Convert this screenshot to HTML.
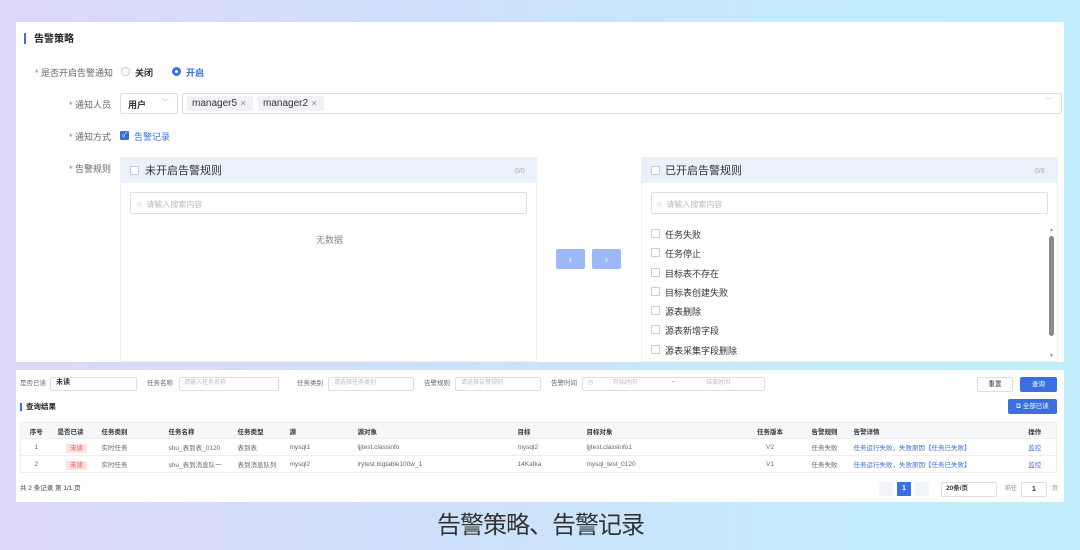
<!DOCTYPE html>
<html><head><meta charset="utf-8"><style>
*{box-sizing:border-box;margin:0;padding:0}
body{width:1080px;height:550px;overflow:hidden;font-family:"Liberation Sans","Noto Sans CJK SC",sans-serif;background:linear-gradient(90deg,#dcd8f8 0%,#cfe0fb 40%,#c3ebfb 75%,#c0ecfb 100%);position:relative;color:#333}
.abs{position:absolute}
.card{position:absolute;background:#fff}
.t{position:absolute;white-space:nowrap;line-height:1.2}
.u{margin-top:2px}
.lab{font-size:9px;color:#666}
.req{color:#e55}
.box{position:absolute;border:1px solid #dcdfe6;border-radius:2px;background:#fff}
.cb{position:absolute;width:9px;height:9px;border:1px solid #ccc;border-radius:1px;background:#fff}
table{border-collapse:collapse;position:absolute;font-size:6.5px;color:#666;table-layout:fixed}
td{height:17px;border-bottom:1px solid #eee;padding-left:6px;white-space:nowrap;overflow:hidden}
tr.h td{background:#f5f7fa;color:#333;font-weight:bold;height:16px}
.tag{background:#fde2e2;color:#e55;padding:1px 4px}
.lk{color:#3a6fe0}
</style></head><body>
<div class="card" style="left:16px;top:22px;width:1048px;height:340px"></div>
<div class="abs" style="left:24px;top:33px;width:2px;height:11px;background:#3a6fe0"></div>
<div class="t u" style="left:34px;top:32px;font-size:10px;font-weight:bold;color:#222">告警策略</div>

<div class="t lab u" style="left:35px;top:66px"><span class="req">* </span>是否开启告警通知</div>
<div class="abs" style="left:121px;top:67px;width:9px;height:9px;border:1px solid #ccc;border-radius:50%"></div>
<div class="t u" style="left:135px;top:66px;font-size:9px;color:#333;font-weight:bold">关闭</div>
<div class="abs" style="left:172px;top:67px;width:9px;height:9px;border:3px solid #3a6fe0;border-radius:50%"></div>
<div class="t u" style="left:186px;top:66px;font-size:9px;color:#3a6fe0;font-weight:bold">开启</div>

<div class="t lab u" style="left:69px;top:98px"><span class="req">* </span>通知人员</div>
<div class="box" style="left:120px;top:93px;width:58px;height:21px"></div>
<div class="t u" style="left:128px;top:98px;font-size:9px;font-weight:bold">用户</div>
<div class="t" style="left:161px;top:98px;font-size:8px;color:#bbb">﹀</div>
<div class="box" style="left:182px;top:93px;width:880px;height:21px"></div>
<div class="abs" style="left:187px;top:96px;width:66px;height:15px;background:#f0f2f5"></div>
<div class="t u" style="left:192px;top:96px;font-size:10px;color:#333">manager5 <span style="color:#999;font-size:8px">✕</span></div>
<div class="abs" style="left:258px;top:96px;width:66px;height:15px;background:#f0f2f5"></div>
<div class="t u" style="left:263px;top:96px;font-size:10px;color:#333">manager2 <span style="color:#999;font-size:8px">✕</span></div>
<div class="t" style="left:1045px;top:98px;font-size:7px;color:#bbb">﹀</div>

<div class="t lab u" style="left:69px;top:130px"><span class="req">* </span>通知方式</div>
<div class="abs" style="left:120px;top:131px;width:9px;height:9px;background:#3a6fe0;border-radius:1px;color:#fff;font-size:7px;line-height:9px;text-align:center">✓</div>
<div class="t u" style="left:134px;top:130px;font-size:9px;color:#3a6fe0">告警记录</div>

<div class="t lab u" style="left:69px;top:162px"><span class="req">* </span>告警规则</div>

<div class="abs" style="left:120px;top:157px;width:417px;height:205px;border:1px solid #eef0f4;background:#fff"></div>
<div class="abs" style="left:120px;top:157px;width:417px;height:26px;background:#ebf1fb"></div>
<div class="cb" style="left:130px;top:166px"></div>
<div class="t u" style="left:145px;top:163px;font-size:11px;color:#333">未开启告警规则</div>
<div class="t u" style="left:515px;top:166px;font-size:7px;color:#aaa">0/0</div>
<div class="box" style="left:130px;top:192px;width:397px;height:22px"></div>
<div class="t u" style="left:137px;top:198px;font-size:8px;color:#bbb">○ &nbsp;请输入搜索内容</div>
<div class="t u" style="left:316px;top:233px;font-size:9px;color:#888">无数据</div>

<div class="abs" style="left:556px;top:249px;width:29px;height:20px;background:#9db9f5;border-radius:2px;color:#fff;font-size:9px;text-align:center;line-height:20px">‹</div>
<div class="abs" style="left:592px;top:249px;width:29px;height:20px;background:#9db9f5;border-radius:2px;color:#fff;font-size:9px;text-align:center;line-height:20px">›</div>

<div class="abs" style="left:641px;top:157px;width:417px;height:205px;border:1px solid #eef0f4;background:#fff"></div>
<div class="abs" style="left:641px;top:157px;width:417px;height:26px;background:#ebf1fb"></div>
<div class="cb" style="left:651px;top:166px"></div>
<div class="t u" style="left:665px;top:163px;font-size:11px;color:#333">已开启告警规则</div>
<div class="t u" style="left:1035px;top:166px;font-size:7px;color:#aaa">0/8</div>
<div class="box" style="left:651px;top:192px;width:397px;height:22px"></div>
<div class="t u" style="left:657px;top:198px;font-size:8px;color:#bbb">○ &nbsp;请输入搜索内容</div>
<div class="cb" style="left:651px;top:229px"></div><div class="t u" style="left:665px;top:228px;font-size:9px">任务失败</div>
<div class="cb" style="left:651px;top:248px"></div><div class="t u" style="left:665px;top:247px;font-size:9px">任务停止</div>
<div class="cb" style="left:651px;top:268px"></div><div class="t u" style="left:665px;top:267px;font-size:9px">目标表不存在</div>
<div class="cb" style="left:651px;top:287px"></div><div class="t u" style="left:665px;top:286px;font-size:9px">目标表创建失败</div>
<div class="cb" style="left:651px;top:306px"></div><div class="t u" style="left:665px;top:305px;font-size:9px">源表删除</div>
<div class="cb" style="left:651px;top:325px"></div><div class="t u" style="left:665px;top:324px;font-size:9px">源表新增字段</div>
<div class="cb" style="left:651px;top:345px"></div><div class="t u" style="left:665px;top:344px;font-size:9px">源表采集字段删除</div>
<div class="abs" style="left:1049px;top:236px;width:5px;height:100px;background:#8a8a8a;border-radius:3px"></div>
<div class="t" style="left:1049px;top:227px;font-size:5px;color:#888">▲</div>
<div class="t" style="left:1049px;top:353px;font-size:5px;color:#888">▼</div>

<div class="card" style="left:16px;top:370px;width:1048px;height:132px"></div>
<div class="t" style="left:20px;top:380px;font-size:6.5px;color:#666">是否已读</div>
<div class="box" style="left:50px;top:377px;width:87px;height:14px"></div><div class="t" style="left:56px;top:379px;font-size:7px;font-weight:bold">未读</div>
<div class="t" style="left:147px;top:380px;font-size:6.5px;color:#666">任务名称</div>
<div class="box" style="left:179px;top:377px;width:100px;height:14px"></div><div class="t" style="left:184px;top:380px;font-size:6px;color:#bbb">请输入任务名称</div>
<div class="t" style="left:297px;top:380px;font-size:6.5px;color:#666">任务类别</div>
<div class="box" style="left:328px;top:377px;width:86px;height:14px"></div><div class="t" style="left:334px;top:380px;font-size:6px;color:#bbb">请选择任务类别</div>
<div class="t" style="left:424px;top:380px;font-size:6.5px;color:#666">告警规则</div>
<div class="box" style="left:455px;top:377px;width:86px;height:14px"></div><div class="t" style="left:461px;top:380px;font-size:6px;color:#bbb">请选择告警规则</div>
<div class="t" style="left:551px;top:380px;font-size:6.5px;color:#666">告警时间</div>
<div class="box" style="left:582px;top:377px;width:183px;height:14px"></div>
<div class="t" style="left:588px;top:380px;font-size:6px;color:#bbb">◷</div>
<div class="t" style="left:613px;top:380px;font-size:6px;color:#bbb">开始时间</div>
<div class="t" style="left:672px;top:379px;font-size:7px;color:#555">-</div>
<div class="t" style="left:706px;top:380px;font-size:6px;color:#bbb">结束时间</div>
<div class="box" style="left:977px;top:377px;width:36px;height:15px;text-align:center;font-size:6.5px;line-height:13px">重置</div>
<div class="abs" style="left:1020px;top:377px;width:37px;height:15px;background:#3a6fe0;border-radius:2px;color:#fff;text-align:center;font-size:6.5px;line-height:15px">查询</div>
<div class="abs" style="left:20px;top:403px;width:2px;height:8px;background:#3a6fe0"></div>
<div class="t" style="left:26px;top:402px;font-size:7.5px;font-weight:bold;color:#222">查询结果</div>
<div class="abs" style="left:1008px;top:399px;width:49px;height:15px;background:#3a6fe0;border-radius:2px;color:#fff;text-align:center;font-size:6.5px;line-height:15px">⧉ 全部已读</div>

<table style="left:20px;top:422px;width:1037px;border:1px solid #eee">
<colgroup><col style="width:31px"><col style="width:44px"><col style="width:67px"><col style="width:69px"><col style="width:52px"><col style="width:68px"><col style="width:160px"><col style="width:69px"><col style="width:158px"><col style="width:57px"><col style="width:52px"><col style="width:160px"><col></colgroup>
<tr class="h"><td style="text-align:center;padding:0">序号</td><td>是否已读</td><td>任务类别</td><td>任务名称</td><td>任务类型</td><td>源</td><td>源对象</td><td>目标</td><td>目标对象</td><td style="text-align:center">任务版本</td><td style="text-align:center">告警规则</td><td>告警详情</td><td style="text-align:center">操作</td></tr>
<tr><td style="text-align:center;padding:0">1</td><td style="text-align:center"><span class="tag">未读</span></td><td>实时任务</td><td>shu_表到表_0120</td><td>表到表</td><td>mysql1</td><td>ljjtest.classinfo</td><td>mysql2</td><td>ljjtest.classinfo1</td><td style="text-align:center">V2</td><td style="text-align:center">任务失败</td><td class="lk">任务运行失败，失败原因【任务已失败】</td><td style="text-align:center" class="lk">监控</td></tr>
<tr><td style="text-align:center;padding:0">2</td><td style="text-align:center"><span class="tag">未读</span></td><td>实时任务</td><td>shu_表到消息队一</td><td>表到消息队列</td><td>mysql2</td><td>lrytest.bigtable100w_1</td><td>14Kafka</td><td>mysql_test_0120</td><td style="text-align:center">V1</td><td style="text-align:center">任务失败</td><td class="lk">任务运行失败，失败原因【任务已失败】</td><td style="text-align:center" class="lk">监控</td></tr>
</table>

<div class="t" style="left:20px;top:485px;font-size:6.5px;color:#444">共 2 条记录 第 1/1 页</div>
<div class="abs" style="left:879px;top:482px;width:14px;height:14px;background:#f2f4f8"></div>
<div class="abs" style="left:897px;top:482px;width:14px;height:14px;background:#3a6fe0;color:#fff;font-size:7px;text-align:center;line-height:14px;font-weight:bold">1</div>
<div class="abs" style="left:915px;top:482px;width:14px;height:14px;background:#f2f4f8"></div>
<div class="box" style="left:941px;top:482px;width:56px;height:15px"></div><div class="t" style="left:946px;top:485px;font-size:6.5px;font-weight:bold">20条/页</div>
<div class="t" style="left:1005px;top:486px;font-size:6px;color:#888">前往</div>
<div class="box" style="left:1021px;top:482px;width:26px;height:15px;text-align:center;font-size:7px;line-height:13px;font-weight:bold">1</div>
<div class="t" style="left:1052px;top:486px;font-size:6px;color:#888">页</div>

<div class="t" style="left:437px;top:512px;font-size:24px;color:#333;letter-spacing:-1px">告警策略、告警记录</div>
</body></html>
